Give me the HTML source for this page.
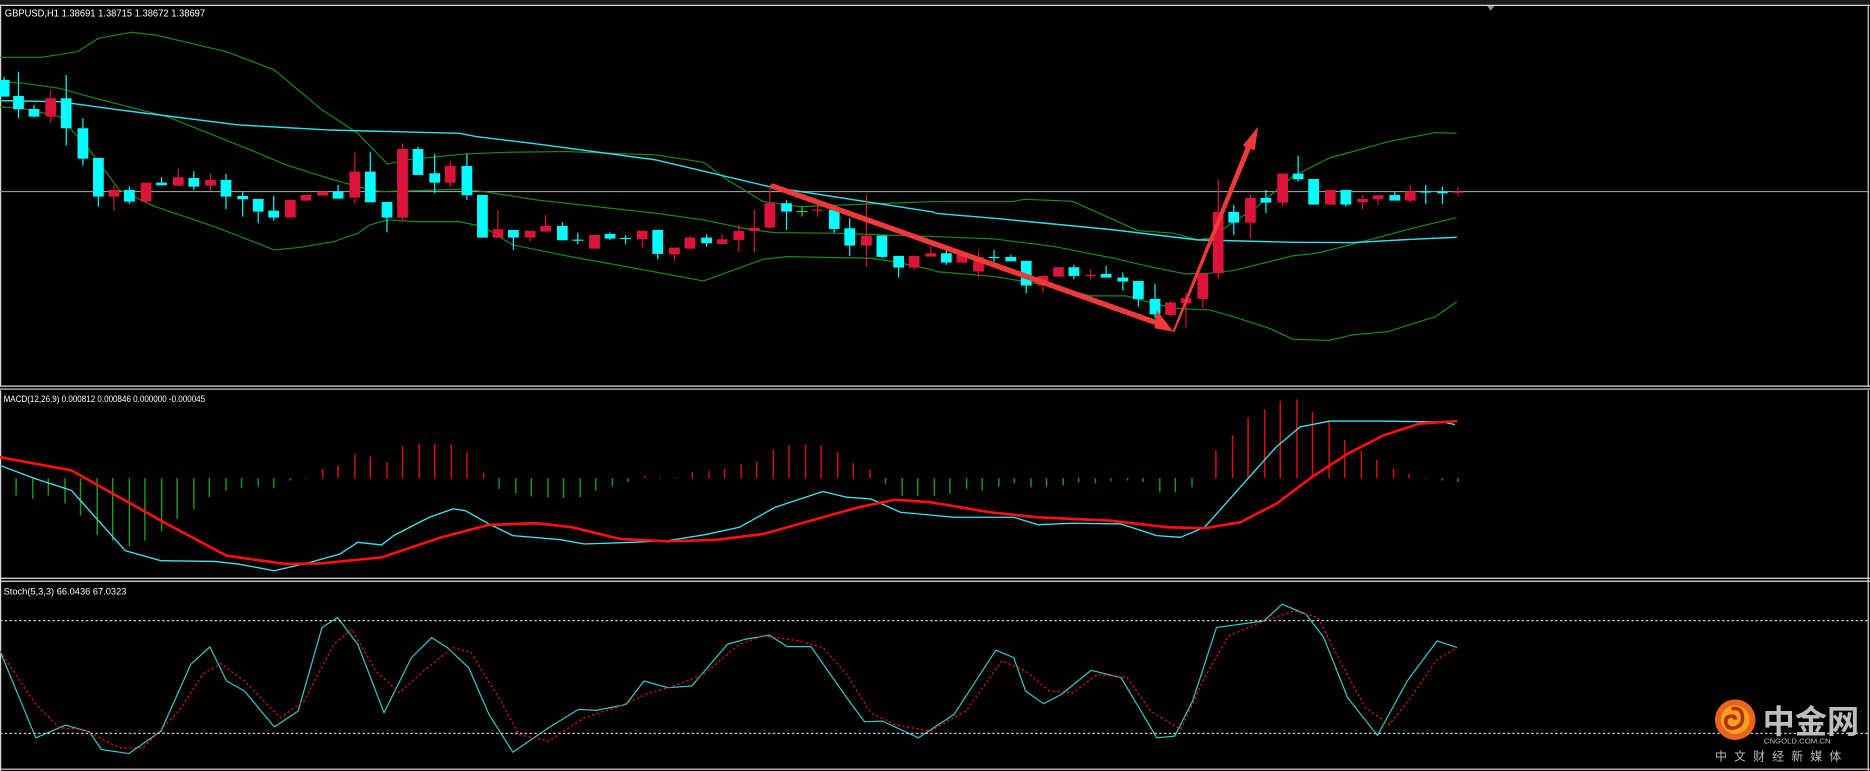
<!DOCTYPE html>
<html><head><meta charset="utf-8"><style>
html,body{margin:0;padding:0;background:#000;overflow:hidden}
svg{display:block}
</style></head><body>
<svg id="s" width="1870" height="771" viewBox="0 0 1568 646" preserveAspectRatio="none" xmlns="http://www.w3.org/2000/svg">
<rect x="0" y="0" width="1568" height="646" fill="#000"/>
<rect x="0" y="0" width="1568" height="4" fill="#1a1a1a"/>
<line x1="0" y1="4.5" x2="1568" y2="4.5" stroke="#d8d8d8" stroke-width="1"/>
<line x1="1566.5" y1="4" x2="1566.5" y2="646" stroke="#d8d8d8" stroke-width="1"/>
<line x1="0.5" y1="4" x2="0.5" y2="646" stroke="#d8d8d8" stroke-width="1"/>
<rect x="0" y="323" width="1568" height="4" fill="#000"/>
<line x1="0" y1="323.5" x2="1568" y2="323.5" stroke="#e0e0e0" stroke-width="1"/>
<line x1="0" y1="326" x2="1568" y2="326" stroke="#e0e0e0" stroke-width="1"/>
<line x1="0" y1="484.5" x2="1568" y2="484.5" stroke="#e0e0e0" stroke-width="1"/>
<line x1="0" y1="487" x2="1568" y2="487" stroke="#e0e0e0" stroke-width="1"/>
<line x1="0" y1="644.5" x2="1568" y2="644.5" stroke="#e0e0e0" stroke-width="1"/>
<polygon points="1247,5 1253,5 1250,9" fill="#8a94a0"/>
<line x1="0" y1="160.5" x2="1566" y2="160.5" stroke="#9a9a9a" stroke-width="1"/>
<g id="main"></g>
<g id="macd"></g>
<g id="stoch"></g>
<text x="4" y="14" fill="#fff" font-family="Liberation Sans, sans-serif" font-size="8.5" textLength="168" lengthAdjust="spacingAndGlyphs">GBPUSD,H1  1.38691 1.38715 1.38672 1.38697</text>
<text x="3" y="337" fill="#fff" font-family="Liberation Sans, sans-serif" font-size="8" textLength="169" lengthAdjust="spacingAndGlyphs">MACD(12,26,9) 0.000812 0.000846 0.000000 -0.000045</text>
<text x="3" y="498" fill="#fff" font-family="Liberation Sans, sans-serif" font-size="8" textLength="103" lengthAdjust="spacingAndGlyphs">Stoch(5,3,3) 66.0436 67.0323</text>
<line x1="0" y1="520" x2="1566" y2="520" stroke="#ccc" stroke-width="1" stroke-dasharray="2,2"/>
<line x1="0" y1="614.5" x2="1566" y2="614.5" stroke="#ccc" stroke-width="1" stroke-dasharray="2,2"/>
<g>
<circle cx="1455" cy="603" r="17" fill="#e8641c"/>
<circle cx="1455" cy="603" r="12" fill="#f5a020"/>
<path d="M1452 594 q8 -2 9 6 q1 8 -7 10 q-6 1 -7 -5 q0 -5 5 -5 q3 0 3 3" fill="none" stroke="#b03010" stroke-width="3"/>
<text x="1478" y="614" fill="#bdbdbd" font-family="Noto Sans CJK SC, sans-serif" font-size="27" font-weight="bold">中金网</text>
<text x="1479" y="623" fill="#bdbdbd" font-family="Liberation Sans, sans-serif" font-size="6.5">CNGOLD.COM.CN</text>
<text x="1438" y="637" fill="#bdbdbd" font-family="Noto Sans CJK SC, sans-serif" font-size="10" letter-spacing="6">中文财经新媒体</text>
</g>
</svg>
<script>
var NS="http://www.w3.org/2000/svg";
function el(p,t,a){var e=document.createElementNS(NS,t);for(var k in a)e.setAttribute(k,a[k]);p.appendChild(e);return e;}
var main=document.getElementById('main'),macd=document.getElementById('macd'),sto=document.getElementById('stoch');
var Y1=0.2792;
function z1(x,y){return [x/2,y*Y1];}
function z2(x,y){return [784+x/2,y*Y1];}
function poly(g,pts,f,col,w,dash){var s=pts.map(function(p){var q=f(p[0],p[1]);return q[0].toFixed(1)+','+q[1].toFixed(1);}).join(' ');
 var a={points:s,fill:'none',stroke:col,'stroke-width':w,'stroke-linejoin':'round'};if(dash)a['stroke-dasharray']=dash;el(g,'polyline',a);}
var G='#1a8a1a';
poly(main,[[0,172],[70,172],[130,155],[165,115],[220,97],[260,105],[380,155],[460,210],[540,330],[600,400],[650,493],[680,480],[780,462],[850,457],[950,455],[1100,465],[1180,487],[1220,540],[1280,605],[1340,620],[1568,605]],z1,G,1);
poly(main,[[0,605],[130,605],[150,598],[230,604],[340,692],[400,700],[440,720],[460,715],[540,620],[600,530],[660,475],[760,425],[840,398],[875,400]],z2,G,1);
poly(main,[[0,245],[40,250],[100,265],[150,290],[280,350],[420,450],[480,495],[560,540],[610,565],[640,575],[700,572],[740,570],[780,567],[810,575],[900,600],[1000,620],[1100,640],[1180,660],[1260,690],[1300,698],[1400,700],[1480,705],[1568,710]],z1,G,1);
poly(main,[[0,710],[100,717],[200,740],[300,775],[360,800],[420,822],[460,820],[500,812],[600,768],[640,760],[700,733],[800,685],[875,653]],z2,G,1);
poly(main,[[0,322],[30,322],[100,350],[150,450],[200,570],[260,620],[360,680],[460,750],[500,743],[560,725],[600,700],[620,675],[650,660],[700,665],[770,665],[810,680],[860,735],[950,768],[1050,800],[1180,843],[1200,830],[1280,778],[1320,770],[1460,775],[1500,785],[1568,812]],z1,G,1);
poly(main,[[0,815],[100,830],[200,860],[260,888],[320,888],[400,925],[460,930],[500,950],[560,985],[600,1018],[660,1022],[700,1005],[760,995],[840,950],[875,905]],z2,G,1);
poly(main,[[0,302],[100,305],[200,330],[400,375],[550,390],[770,400],[800,410],[900,432],[1100,480],[1290,560],[1568,637]],z1,'#2fe0ee',1.2);
poly(main,[[0,640],[100,655],[300,690],[440,720],[600,727],[700,728],[800,718],[875,712]],z2,'#2fe0ee',1.2);
var C1=[[5,240,290,230,290,'c'],[30,288,328,215,355,'c'],[56,327,350,315,352,'c'],[83,295,350,270,368,'r'],[110,295,385,225,437,'c'],[137,385,476,355,497,'c'],[163,474,590,474,620,'c'],[190,570,590,555,632,'r'],[216,570,605,560,612,'c'],[244,548,605,548,605,'r'],[270,548,556,532,556,'c'],[297,532,557,507,557,'r'],[324,534,560,514,570,'c'],[351,540,557,520,572,'r'],[378,540,590,522,628,'c'],[405,588,598,575,650,'c'],[432,597,635,597,670,'c'],[458,632,653,588,662,'c'],[485,600,653,600,653,'r'],[512,585,602,585,602,'r'],[539,575,587,575,587,'r'],[566,575,596,555,596,'c'],[593,515,593,458,610,'r'],[620,515,607,455,607,'c'],[647,606,653,606,697,'c'],[674,447,653,430,665,'r'],[700,447,525,440,525,'c'],[727,520,548,462,580,'c'],[754,498,548,482,562,'r'],[781,498,586,462,600,'c'],[807,585,713,585,713,'c'],[834,688,713,630,713,'r'],[860,690,713,690,750,'c'],[887,692,713,692,725,'r'],[914,678,695,645,695,'r'],[941,678,721,667,721,'c'],[968,719,722,698,733,'c'],[995,705,746,705,746,'r'],[1021,702,716,698,720,'c'],[1048,714,717,706,733,'c'],[1075,692,718,692,743,'r'],[1102,690,762,690,778,'c'],[1129,743,763,743,780,'r'],[1156,713,746,707,746,'r'],[1183,713,730,703,740,'c'],[1210,718,732,703,732,'r'],[1237,693,720,675,757,'r'],[1263,684,693,630,757,'r'],[1290,610,683,562,687,'r'],[1317,610,635,600,690,'c'],[1344,633,636,620,650,'g'],[1370,629,632,615,650,'r'],[1397,630,687,615,698,'c'],[1424,685,737,655,768,'c'],[1451,707,737,585,800,'r'],[1478,707,771,707,775,'c'],[1505,768,803,768,832,'c'],[1532,768,803,768,810,'r'],[1559,760,770,740,770,'r']];
var C2=[[17,760,788,750,795,'c'],[44,765,788,752,788,'r'],[71,772,815,752,832,'r'],[98,771,774,750,785,'c'],[125,771,784,765,784,'c'],[152,783,857,783,880,'c'],[179,828,857,828,878,'r'],[206,802,830,802,830,'r'],[232,802,828,795,838,'c'],[259,825,828,808,838,'r'],[286,822,833,798,833,'c'],[313,833,845,818,872,'c'],[340,843,898,843,920,'c'],[367,897,943,852,955,'c'],[393,908,945,903,950,'r'],[420,895,910,878,983,'r'],[447,820,897,820,925,'r'],[474,636,820,540,838,'r'],[500,636,668,615,705,'c'],[527,594,668,585,715,'r'],[554,594,608,570,640,'c'],[581,521,608,521,620,'r'],[608,521,538,468,545,'c'],[634,537,614,537,614,'c'],[661,570,614,570,614,'r'],[688,570,614,570,620,'c'],[715,597,607,585,628,'r'],[742,586,598,586,615,'r'],[769,585,602,575,602,'c'],[796,574,602,555,608,'r'],[822,574,578,555,612,'c'],[849,574,580,560,612,'c'],[876,575,578,562,590,'r']];
var COL={c:'#00ffff',r:'#dc143c',g:'#3cd23c'};
function cand(c,f){var a=f(c[0],c[1]),b=f(c[0],c[2]),w1=f(c[0],c[3]),w2=f(c[0],c[4]);var col=COL[c[5]];var x=Math.round(a[0])+0.5;
 el(main,'line',{x1:x,y1:w1[1],x2:x,y2:w2[1],stroke:col,'stroke-width':1});
 var h=Math.max(1,b[1]-a[1]);el(main,'rect',{x:x-4.5,y:a[1],width:9,height:h,fill:col});}
C1.forEach(function(c){cand(c,z1)});C2.forEach(function(c){cand(c,z2)});
el(main,'line',{x1:648,y1:156,x2:974,y2:272,stroke:'#f03a3a','stroke-width':4.5,'stroke-linecap':'round'});
el(main,'polygon',{points:'970,260 984,278 968,275',fill:'#f03a3a'});
el(main,'polygon',{points:'983,278 985,278 1049,124 1045,122',fill:'#f03a3a'});
el(main,'polygon',{points:'1055,106 1042,122 1052,126',fill:'#f03a3a'});
function z3(x,y){return [x,318.6+y*0.28];}
var Z=z3(0,293)[1];
var hist=[[13,345],[27,355],[40,345],[54,368],[67,405],[81,462],[94,480],[108,497],[121,480],[135,452],[148,415],[162,385],[175,350],[189,330],[202,322],[216,318],[229,322],[243,300],[256,290],[270,265],[283,255],[297,220],[310,228],[324,245],[337,197],[351,190],[364,190],[378,192],[391,215],[405,277],[418,325],[432,338],[445,348],[459,350],[472,352],[486,350],[499,330],[513,318],[526,305],[540,286],[553,290],[567,290],[580,275],[594,272],[607,265],[621,250],[634,245],[648,207],[661,195],[675,192],[688,195],[702,215],[715,248],[729,268],[742,310],[756,345],[769,345],[783,345],[796,340],[810,325],[823,330],[837,318],[850,308],[864,320],[877,318],[891,315],[904,305],[918,308],[931,302],[945,300],[958,305],[972,335],[985,335],[999,320],[1019,210],[1033,165],[1046,112],[1060,88],[1073,62],[1087,57],[1100,95],[1114,122],[1127,178],[1141,210],[1154,238],[1168,265],[1181,280],[1195,290],[1209,300],[1222,305]];
hist.forEach(function(h){var y=z3(0,h[1])[1];el(macd,'line',{x1:h[0]+0.5,y1:Z,x2:h[0]+0.5,y2:y,stroke:h[1]>293?'#1f9a1f':'#e01010','stroke-width':1.2});});
poly(macd,[[0,255],[30,295],[60,330],[80,410],[105,510],[135,540],[180,542],[200,550],[230,570],[260,545],[285,520],[300,485],[320,493],[330,465],[360,410],[380,385],[390,390],[410,430],[430,465],[470,477],[490,490],[530,485],[560,480],[590,463],[620,440],[650,380],[690,333],[710,350],[730,355],[755,395],[800,410],[850,410],[870,432],[900,428],[940,430],[970,465],[990,470],[1010,440],[1030,360],[1050,280],[1070,200],[1090,140],[1115,122],[1160,122],[1210,125],[1220,133]],z3,'#3ee6f0',1.1);
poly(macd,[[0,230],[60,270],[100,350],[140,430],[190,525],[240,550],[270,548],[320,530],[370,470],[410,433],[450,428],[480,440],[520,475],[560,482],[600,478],[640,460],[680,420],[720,380],[750,358],[780,365],[830,395],[870,410],[930,420],[980,440],[1010,443],[1040,425],[1070,370],[1100,290],[1130,220],[1160,165],[1190,130],[1222,122]],z3,'#ff1010',2.2);
poly(sto,[[0,810],[30,1070],[55,1032],[75,1052],[85,1105],[108,1117],[135,1050],[160,850],[176,798],[190,900],[205,930],[230,1037],[250,990],[270,740],[283,710],[300,790],[322,995],[345,830],[362,770],[375,800],[393,860],[410,1000],[430,1113],[460,1040],[485,985],[500,988],[525,970],[540,900],[560,920],[580,915],[610,790],[625,775],[645,763],[660,797],[680,797],[710,950],[725,1022],[740,1020],[770,1070],[800,1000],[835,808],[850,830],[860,930],[875,968],[890,940],[915,868],[940,890],[970,1070],[985,1065],[1000,960],[1020,740],[1060,720],[1075,670],[1095,700],[1110,770],[1130,950],[1155,1063],[1180,900],[1205,780],[1222,800]],z3,'#3ac8d0',1);
poly(sto,[[0,810],[30,970],[50,1040],[70,1045],[100,1100],[120,1100],[150,990],[170,880],[185,848],[205,900],[235,1010],[255,960],[280,790],[295,745],[315,870],[335,935],[355,870],[380,800],[395,815],[420,960],[435,1060],[460,1080],[490,1010],[520,975],[545,935],[565,915],[590,880],[620,790],[640,765],[670,780],[690,800],[710,880],[730,995],[750,1030],[780,1050],[810,990],[840,840],[860,870],[880,930],[900,935],[920,880],[945,890],[965,990],[990,1045],[1010,890],[1030,765],[1060,720],[1085,690],[1105,710],[1125,850],[1145,980],[1165,1030],[1185,940],[1205,835],[1222,800]],z3,'#e01818',1,'2,2');
</script>
</body></html>
